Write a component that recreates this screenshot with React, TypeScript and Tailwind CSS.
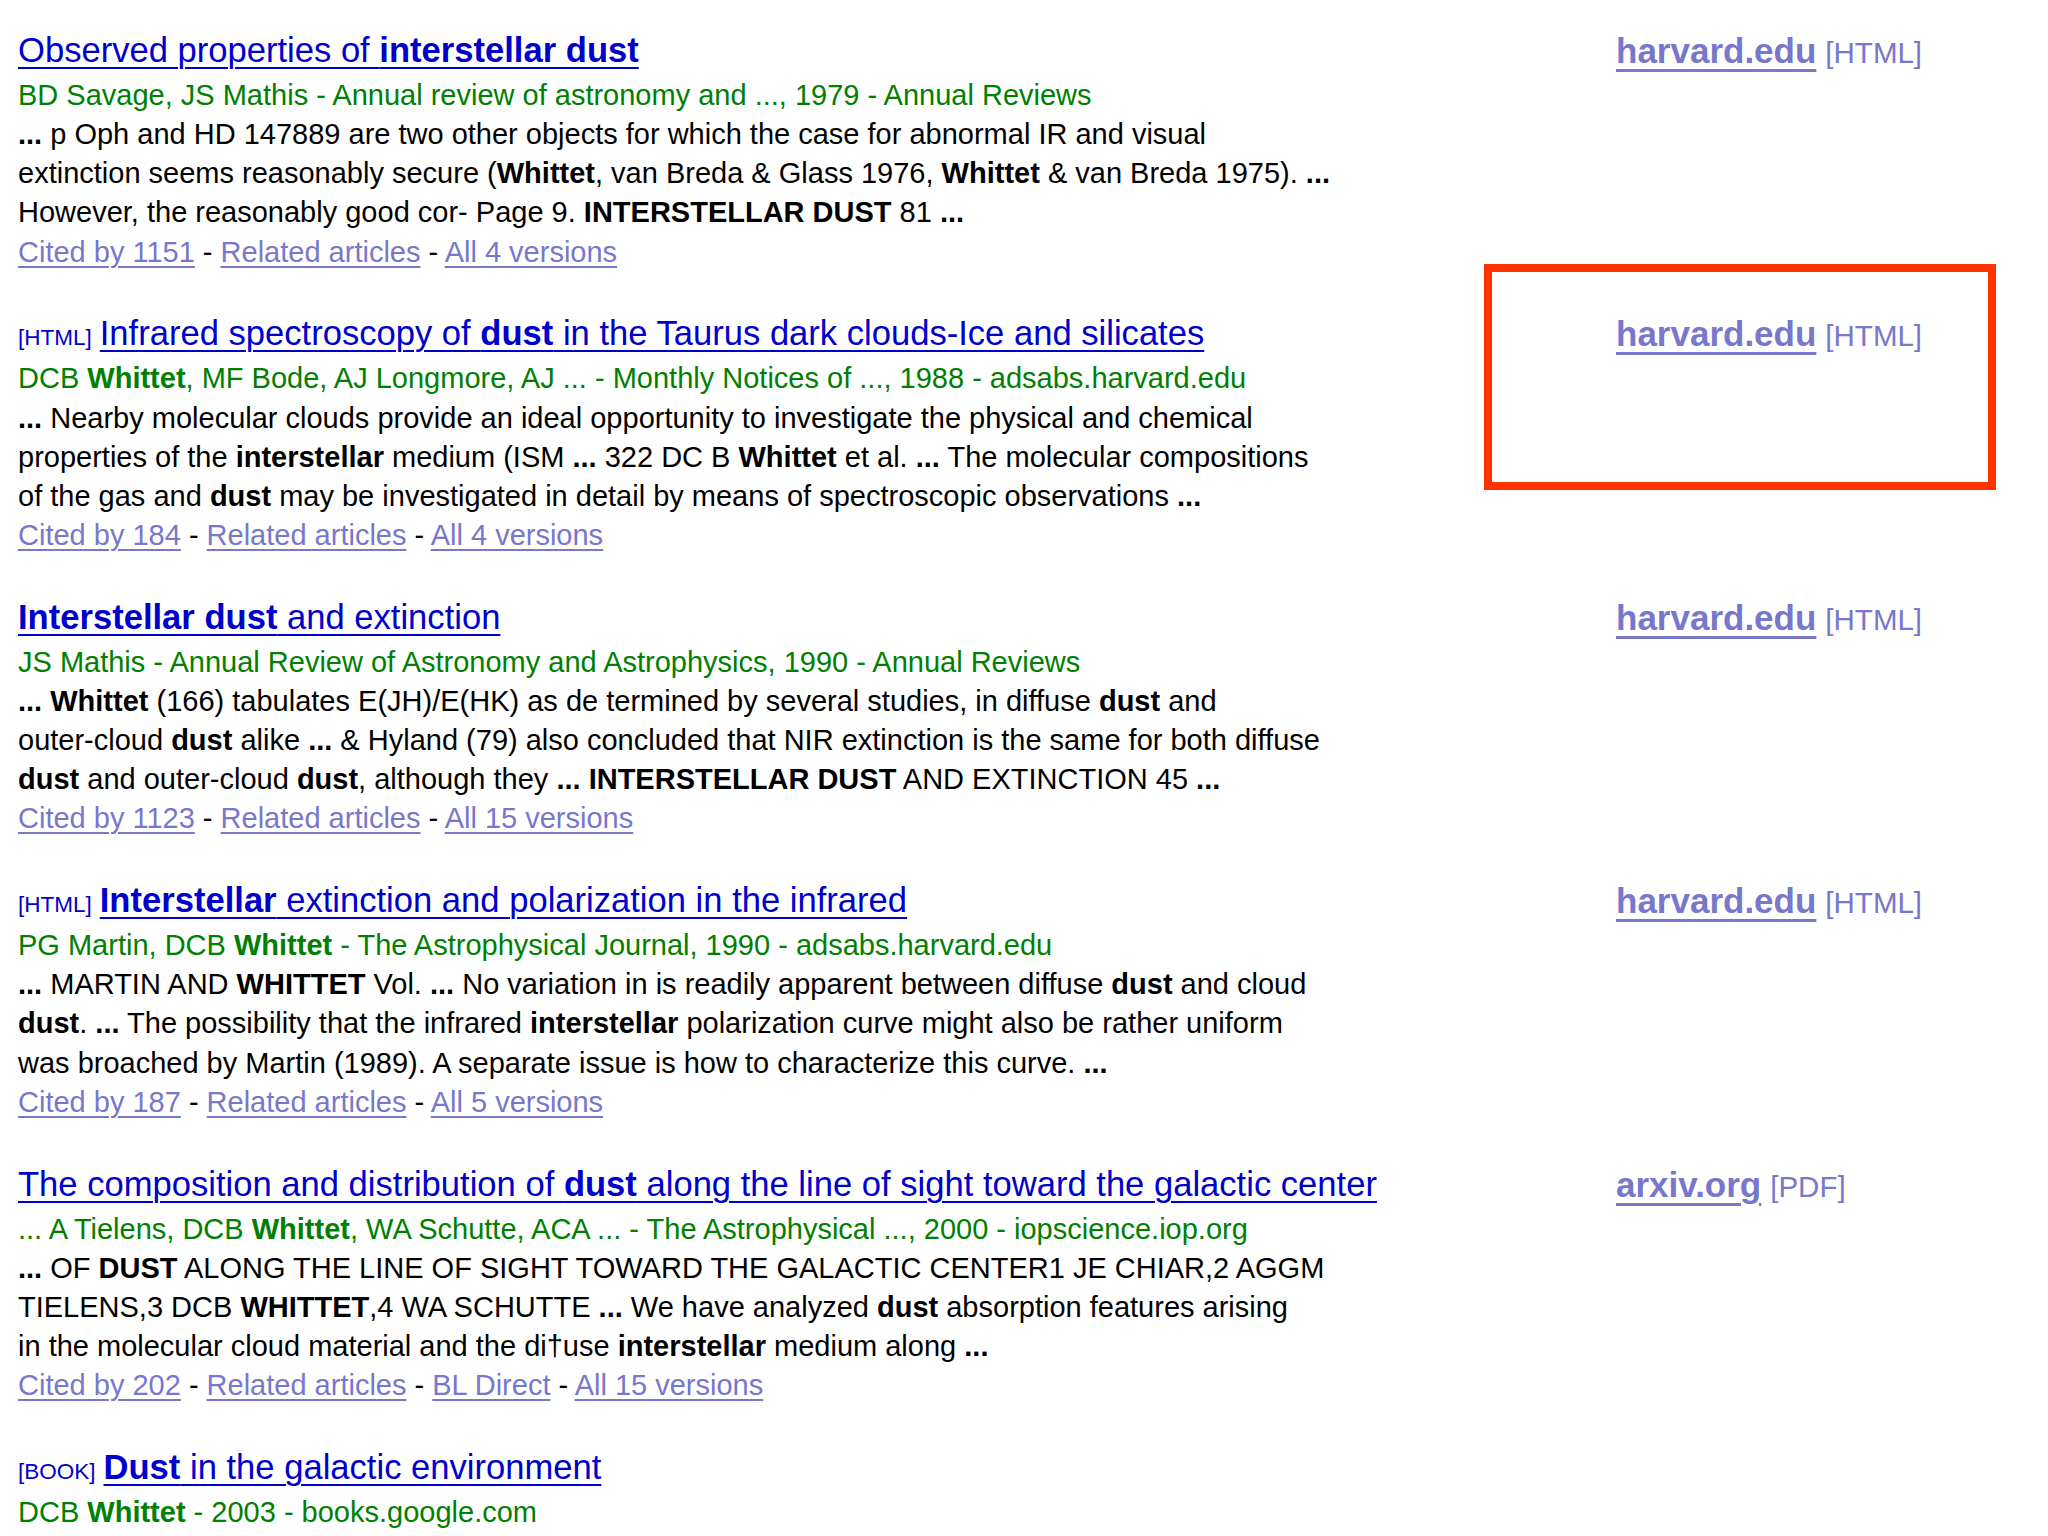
import React from "react";

type Entry = {
  tag?: string;
  title: string;
  authors: string;
  snippet: string[];
  links: string[];
  source?: { host: string; kind: string };
};

const ENTRIES: Entry[] = [
  {
    title: "Observed properties of **interstellar dust**",
    authors: "BD Savage, JS Mathis - Annual review of astronomy and ..., 1979 - Annual Reviews",
    snippet: [
      "**...** p Oph and HD 147889 are two other objects for which the case for abnormal IR and visual",
      "extinction seems reasonably secure (**Whittet**, van Breda & Glass 1976, **Whittet** & van Breda 1975). **...**",
      "However, the reasonably good cor- Page 9. **INTERSTELLAR DUST** 81 **...**",
    ],
    links: ["Cited by 1151", "Related articles", "All 4 versions"],
    source: { host: "harvard.edu", kind: "[HTML]" },
  },
  {
    tag: "[HTML]",
    title: "Infrared spectroscopy of **dust** in the Taurus dark clouds-Ice and silicates",
    authors: "DCB **Whittet**, MF Bode, AJ Longmore, AJ ... - Monthly Notices of ..., 1988 - adsabs.harvard.edu",
    snippet: [
      "**...** Nearby molecular clouds provide an ideal opportunity to investigate the physical and chemical",
      "properties of the **interstellar** medium (ISM **...** 322 DC B **Whittet** et al. **...** The molecular compositions",
      "of the gas and **dust** may be investigated in detail by means of spectroscopic observations **...**",
    ],
    links: ["Cited by 184", "Related articles", "All 4 versions"],
    source: { host: "harvard.edu", kind: "[HTML]" },
  },
  {
    title: "**Interstellar dust** and extinction",
    authors: "JS Mathis - Annual Review of Astronomy and Astrophysics, 1990 - Annual Reviews",
    snippet: [
      "**... Whittet** (166) tabulates E(JH)/E(HK) as de termined by several studies, in diffuse **dust** and",
      "outer-cloud **dust** alike **...** & Hyland (79) also concluded that NIR extinction is the same for both diffuse",
      "**dust** and outer-cloud **dust**, although they **... INTERSTELLAR DUST** AND EXTINCTION 45 **...**",
    ],
    links: ["Cited by 1123", "Related articles", "All 15 versions"],
    source: { host: "harvard.edu", kind: "[HTML]" },
  },
  {
    tag: "[HTML]",
    title: "**Interstellar** extinction and polarization in the infrared",
    authors: "PG Martin, DCB **Whittet** - The Astrophysical Journal, 1990 - adsabs.harvard.edu",
    snippet: [
      "**...** MARTIN AND **WHITTET** Vol. **...** No variation in is readily apparent between diffuse **dust** and cloud",
      "**dust**. **...** The possibility that the infrared **interstellar** polarization curve might also be rather uniform",
      "was broached by Martin (1989). A separate issue is how to characterize this curve. **...**",
    ],
    links: ["Cited by 187", "Related articles", "All 5 versions"],
    source: { host: "harvard.edu", kind: "[HTML]" },
  },
  {
    title: "The composition and distribution of **dust** along the line of sight toward the galactic center",
    authors: "... A Tielens, DCB **Whittet**, WA Schutte, ACA ... - The Astrophysical ..., 2000 - iopscience.iop.org",
    snippet: [
      "**...** OF **DUST** ALONG THE LINE OF SIGHT TOWARD THE GALACTIC CENTER1 JE CHIAR,2 AGGM",
      "TIELENS,3 DCB **WHITTET**,4 WA SCHUTTE **...** We have analyzed **dust** absorption features arising",
      "in the molecular cloud material and the di†use **interstellar** medium along **...**",
    ],
    links: ["Cited by 202", "Related articles", "BL Direct", "All 15 versions"],
    source: { host: "arxiv.org", kind: "[PDF]" },
  },
  {
    tag: "[BOOK]",
    title: "**Dust** in the galactic environment",
    authors: "DCB **Whittet** - 2003 - books.google.com",
    snippet: [],
    links: [],
  },
];

// "**word**" marks the bold hits, like the highlighted query terms
function Marked({ text }: { text: string }) {
  return (
    <>
      {text.split("**").map((part, i) =>
        i % 2 === 1 ? (
          <b key={i} className="font-bold">
            {part}
          </b>
        ) : (
          <React.Fragment key={i}>{part}</React.Fragment>
        )
      )}
    </>
  );
}

function Result({ entry }: { entry: Entry }) {
  return (
    <div className="flex mb-[36.6px]">
      <div className="w-[1616px] pl-[18px]">
        <div className="h-[51px] leading-[51px] text-[34.6px] whitespace-nowrap">
          {entry.tag && (
            <span className="text-[22.5px] leading-none text-[#0000cc] mr-[8px]">{entry.tag}</span>
          )}
          <a className="text-[#0000cc] underline decoration-[2px] underline-offset-[5px]">
            <Marked text={entry.title} />
          </a>
        </div>
        <div className="text-[29px] leading-[39.15px] whitespace-nowrap">
          <div className="text-[#008000]">
            <Marked text={entry.authors} />
          </div>
          {entry.snippet.map((line, i) => (
            <div key={i} className="text-black">
              <Marked text={line} />
            </div>
          ))}
          {entry.links.length > 0 && (
            <div className="text-black">
              {entry.links.map((l, i) => (
                <React.Fragment key={l}>
                  {i > 0 && " - "}
                  <a className="text-[#7777cc] underline decoration-[1.5px] underline-offset-[4px]">{l}</a>
                </React.Fragment>
              ))}
            </div>
          )}
        </div>
      </div>
      {entry.source && (
        <div className="h-[51px] leading-[51px] text-[35px] whitespace-nowrap text-[#7777cc]">
          <a className="font-bold underline decoration-[3px] underline-offset-[6px]">{entry.source.host}</a>
          <span className="text-[29.5px] leading-none ml-[9px]">{entry.source.kind}</span>
        </div>
      )}
    </div>
  );
}

export default function App() {
  return (
    <div className="relative w-[2048px] h-[1536px] overflow-hidden bg-white pt-[25px] font-['Liberation_Sans',Arial,sans-serif]">
      {ENTRIES.map((e, i) => (
        <Result key={i} entry={e} />
      ))}
      {/* annotation box drawn over the second result */}
      <div className="absolute left-[1484px] top-[264px] w-[512px] h-[226px] border-[8px] border-[#ff3300]" />
    </div>
  );
}
